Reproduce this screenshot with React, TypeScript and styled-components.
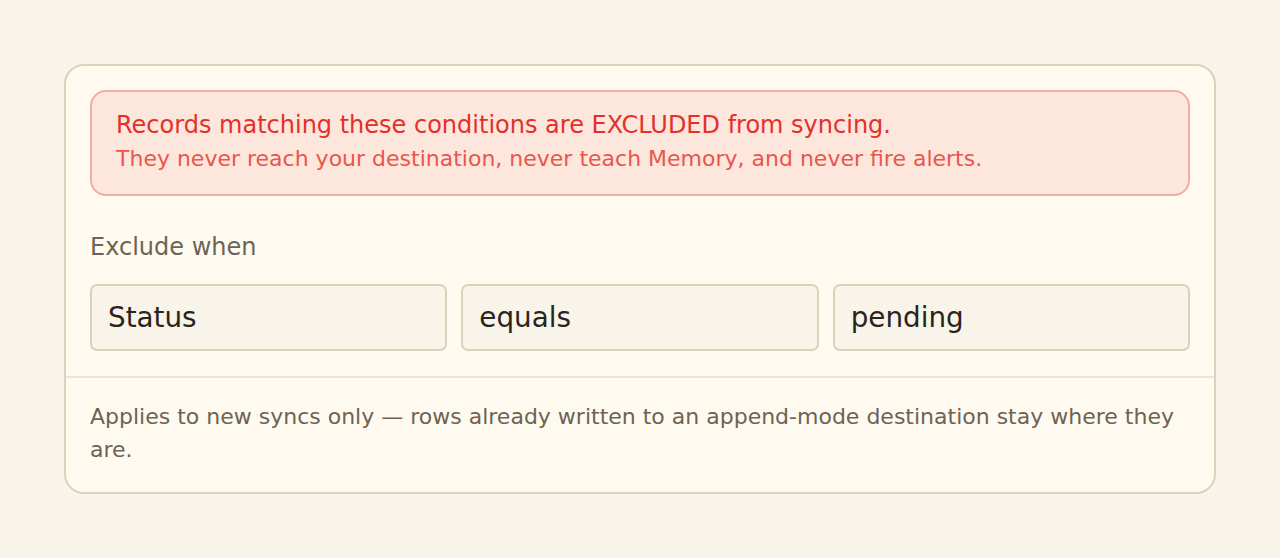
import styled, { createGlobalStyle } from "styled-components";

const GlobalStyle = createGlobalStyle`
  html, body {
    margin: 0;
    padding: 0;
    background: #f9f4ea;
  }
  body {
    font-family: "DejaVu Sans", "Liberation Sans", sans-serif;
  }
`;

const Page = styled.div`
  padding: 64px;
  min-height: 558px;
  box-sizing: border-box;
`;

const Card = styled.section`
  background: #fffaf0;
  border: 2px solid #ddd0bc;
  border-radius: 20px;
  overflow: hidden;
`;

const Body = styled.div`
  padding: 24px 24px 25px;
`;

const Alert = styled.div`
  background: #fde6dc;
  border: 2px solid #f3aba2;
  border-radius: 16px;
  padding: 18px 24px 20px;
`;

const AlertTitle = styled.div`
  color: #e3302b;
  font-size: 24px;
  line-height: 30px;
`;

const AlertText = styled.div`
  margin-top: 4px;
  color: #e8574d;
  font-size: 22px;
  line-height: 30px;
`;

const Label = styled.div`
  margin: 34px 0 19px;
  color: #6d6354;
  font-size: 24px;
  line-height: 35px;
`;

const Conditions = styled.div`
  display: grid;
  grid-template-columns: repeat(3, 1fr);
  gap: 14px;
`;

const Field = styled.div`
  height: 67px;
  box-sizing: border-box;
  display: flex;
  align-items: center;
  padding: 0 16px;
  background: #f9f4ea;
  border: 2px solid #ddd0bb;
  border-radius: 7px;
  color: #2a241b;
  font-size: 27.8px;
`;

const Footer = styled.div`
  border-top: 2px solid #ebe2d2;
  padding: 23px 24px 26px;
  color: #6d6354;
  font-size: 22px;
  line-height: 32.6px;
`;

export default function App() {
  return (
    <Page>
      <GlobalStyle />
      <Card>
        <Body>
          <Alert>
            <AlertTitle>
              Records matching these conditions are EXCLUDED from syncing.
            </AlertTitle>
            <AlertText>
              They never reach your destination, never teach Memory, and never
              fire alerts.
            </AlertText>
          </Alert>
          <Label>Exclude when</Label>
          <Conditions>
            <Field>Status</Field>
            <Field>equals</Field>
            <Field>pending</Field>
          </Conditions>
        </Body>
        <Footer>
          Applies to new syncs only — rows already written to an append-mode
          destination stay where they are.
        </Footer>
      </Card>
    </Page>
  );
}
